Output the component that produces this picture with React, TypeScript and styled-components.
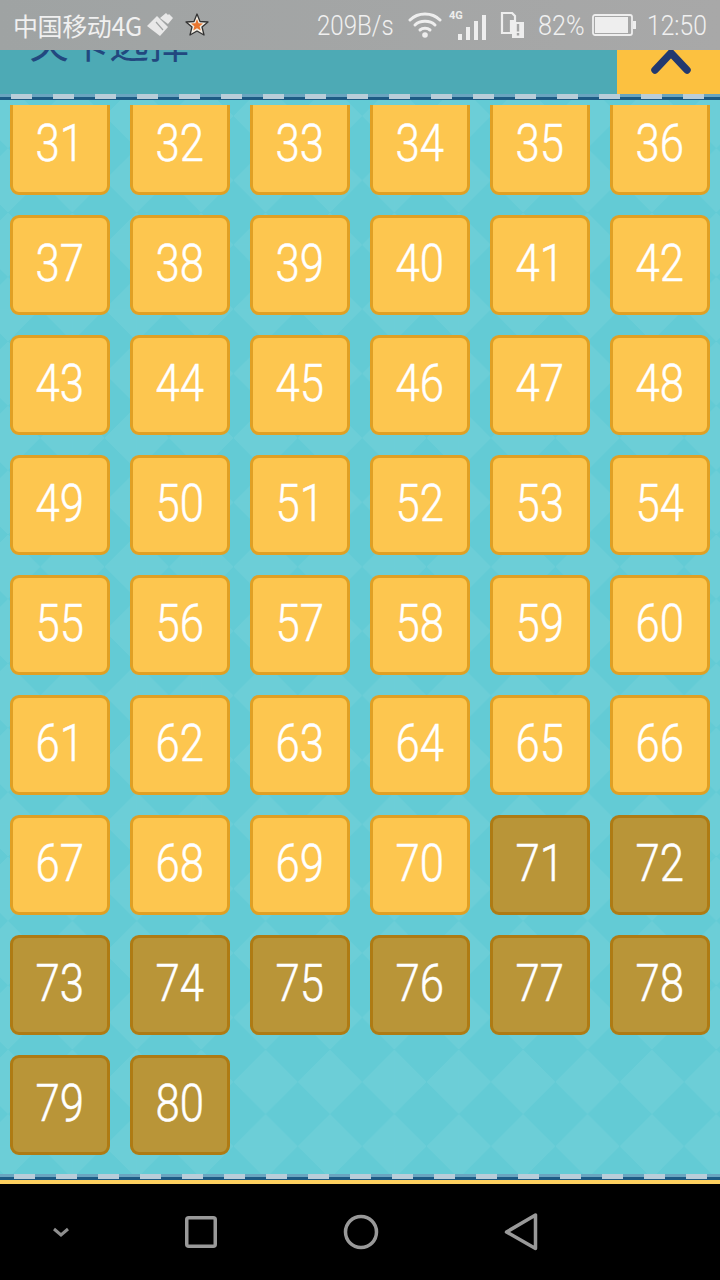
import styled, { createGlobalStyle } from "styled-components";

const GlobalStyle = createGlobalStyle`
  html, body {
    margin: 0;
    padding: 0;
    background: #000;
  }
`;

const Page = styled.div`
  width: 720px;
  height: 1280px;
  display: flex;
  flex-direction: column;
  overflow: hidden;
  font-family: Roboto, "Noto Sans CJK SC", sans-serif;
`;

const StatusBar = styled.div`
  height: 50px;
  flex: none;
  display: flex;
  align-items: center;
  justify-content: space-between;
  padding: 0 13px;
  background: linear-gradient(90deg, #9fa3a3, #a8a8a8);
  color: #f0f0f0;
  position: relative;
  z-index: 2;
`;

const StatusGroup = styled.div`
  display: flex;
  align-items: center;
`;

const Carrier = styled.span`
  font-size: 25px;
  letter-spacing: -0.4px;
  width: 130px;
  white-space: nowrap;
  font-family: "Noto Sans CJK SC", sans-serif;
`;

const NarrowText = styled.span<{ $width: number; $left: number; $scale: number }>`
  display: inline-block;
  width: ${(p) => p.$width}px;
  margin-left: ${(p) => p.$left}px;
  font-size: 28px;
  font-weight: 300;
  white-space: nowrap;
  transform: scaleX(${(p) => p.$scale});
  transform-origin: left center;
`;

const StatusIcon = styled.svg<{ $left: number }>`
  display: block;
  flex: none;
  margin-left: ${(p) => p.$left}px;
`;

const TopBar = styled.header`
  height: 44px;
  flex: none;
  display: flex;
  justify-content: space-between;
  background: #4daab5;
  overflow: hidden;
`;

const Title = styled.h1`
  margin: -38px 0 0 29px;
  font-family: "Noto Sans CJK SC", sans-serif;
  font-size: 40px;
  line-height: 58px;
  font-weight: 400;
  color: #22487f;
`;

const UpButton = styled.button`
  width: 103px;
  border: 0;
  padding: 0 0 0 4px;
  display: flex;
  justify-content: center;
  background: #fcc140;
`;

const Dashes = styled.div<{ $shift: number }>`
  height: 6px;
  flex: none;
  background:
    repeating-linear-gradient(
      90deg,
      #b9cdd9 0 21px,
      transparent 21px 42px
    ) ${(p) => p.$shift}px 0 / 200% 5px no-repeat,
    linear-gradient(#6aa5c0 0 50%, #1d5b84 50% 100%);
`;

const Board = styled.main`
  flex: 1;
  min-height: 0;
  display: flex;
  flex-direction: column;
  padding-top: 5px;
  background-color: #63cbd5;
  background-image:
    linear-gradient(45deg, #ffffff0f 25%, transparent 25%, transparent 75%, #ffffff0f 75%),
    linear-gradient(-45deg, #ffffff0f 25%, transparent 25%, transparent 75%, #ffffff0f 75%);
  background-size: 64.4px 64.4px;
  background-position: 8px 16px;
`;

const LevelClip = styled.div`
  flex: 1;
  min-height: 0;
  overflow: hidden;
`;

const LevelGrid = styled.div`
  display: grid;
  grid-template-columns: repeat(6, 100px);
  gap: 20px;
  margin-top: -10px;
  padding-left: 10px;
`;

const Level = styled.div<{ $locked: boolean }>`
  box-sizing: border-box;
  height: 100px;
  display: flex;
  align-items: center;
  justify-content: center;
  padding-bottom: 3px;
  border: 3px solid ${(p) => (p.$locked ? "#ae7b14" : "#e0a024")};
  border-radius: 9px;
  background: ${(p) => (p.$locked ? "#b99538" : "#fdc64f")};
  color: #fff;
  font-size: 52px;
  font-weight: 300;
  line-height: 60px;
  -webkit-text-stroke: 0.5px #fff;
`;

const LevelNumber = styled.span`
  display: block;
  transform: scaleX(0.84);
`;

const YellowEdge = styled.div`
  height: 4px;
  flex: none;
  background: #fdd05e;
`;

const NavBar = styled.nav`
  height: 96px;
  flex: none;
  display: flex;
  padding-right: 119px;
  background: #000;
`;

const NavSlot = styled.div<{ $wide: boolean }>`
  flex: ${(p) => (p.$wide ? "0 0 160px" : "0 0 121px")};
  display: flex;
  align-items: center;
  justify-content: center;
`;

const levels = Array.from({ length: 50 }, (_, i) => i + 31);

export default function App() {
  return (
    <Page>
      <GlobalStyle />
      <StatusBar>
        <StatusGroup>
          <Carrier>中国移动4G</Carrier>
          <StatusIcon $left={4} width="27" height="24" viewBox="0 0 27 24">
            <path d="M0 13 L10 3 L21 14 L13 23 Z" fill="#e8e8e8" />
            <path d="M13 5 L19 0 L21 2 L22 1 L26 5 L21 11 Z" fill="#e8e8e8" />
            <path d="M9 9 L16 17" stroke="#a0a3a3" strokeWidth="1.2" />
          </StatusIcon>
          <StatusIcon $left={11} width="24" height="24" viewBox="0 0 24 24">
            <path d="M12 1 L15 8.5 L23 9 L17 14 L19 22 L12 18 L5 22 L7 14 L1 9 L9 8.5 Z" fill="#f3efe6" stroke="#333" strokeWidth="1.3" strokeLinejoin="round" />
            <path d="M12 6 L13.6 10.2 L18 10.5 L14.6 13.3 L15.8 17.6 L12 15.2 L8.2 17.6 L9.4 13.3 L6 10.5 L10.4 10.2 Z" fill="#e8762f" />
          </StatusIcon>
        </StatusGroup>
        <StatusGroup>
          <NarrowText $width={76} $left={0} $scale={0.86}>209B/s</NarrowText>
          <StatusIcon $left={15} width="34" height="26" viewBox="0 0 34 26">
            <g fill="none" stroke="#eee" strokeWidth="3" strokeLinecap="round">
              <path d="M2 8 C10 0 24 0 32 8" />
              <path d="M7 13 C12 8 22 8 27 13" />
              <path d="M12 18 C14.500 15.800 19.500 15.800 22 18" />
            </g>
            <circle cx="17" cy="23" r="2.800" fill="#eee" />
          </StatusIcon>
          <StatusIcon $left={6} width="40" height="32" viewBox="0 0 40 32">
            <text x="1" y="10" fontSize="11" fontWeight="700" fontFamily="Roboto, sans-serif" fill="#eee">4G</text>
            <rect x="10" y="25" width="4" height="6" fill="#eee" />
            <rect x="18" y="18" width="4" height="13" fill="#eee" />
            <rect x="26" y="12" width="4" height="19" fill="#eee" />
            <rect x="34" y="6" width="4" height="25" fill="#eee" />
          </StatusIcon>
          <StatusIcon $left={12} width="24" height="26" viewBox="0 0 24 26">
            <path d="M2 1 H12 L15 4 V9 H11 V21 H2 Z" fill="none" stroke="#eee" strokeWidth="2.200" />
            <rect x="12" y="10" width="12" height="16" fill="#eee" />
            <rect x="16.800" y="12" width="2.400" height="7.500" fill="#a5a6a6" />
            <rect x="16.800" y="21" width="2.400" height="2.500" fill="#a5a6a6" />
          </StatusIcon>
          <NarrowText $width={54} $left={14} $scale={0.9}>82%</NarrowText>
          <StatusIcon $left={0} width="45" height="22" viewBox="0 0 45 22">
            <rect x="1" y="1" width="39" height="20" rx="2" fill="none" stroke="#eee" strokeWidth="1.800" />
            <rect x="3" y="3" width="33" height="16" fill="#eee" />
            <rect x="41" y="7" width="3" height="8" fill="#eee" />
          </StatusIcon>
          <NarrowText $width={60} $left={10} $scale={0.88}>12:50</NarrowText>
        </StatusGroup>
      </StatusBar>
      <TopBar>
        <Title>关卡选择</Title>
        <UpButton aria-label="up">
          <svg width="40" height="26" viewBox="0 0 40 26">
            <path d="M4 20 L20 3 L36 20" fill="none" stroke="#22396f" strokeWidth="7.500" strokeLinecap="round" strokeLinejoin="round" />
          </svg>
        </UpButton>
      </TopBar>
      <Dashes $shift={11} />
      <Board>
        <LevelClip>
          <LevelGrid>
            {levels.map((n) => (
              <Level key={n} $locked={n > 70}>
                <LevelNumber>{n}</LevelNumber>
              </Level>
            ))}
          </LevelGrid>
        </LevelClip>
      </Board>
      <Dashes $shift={14} />
      <YellowEdge />
      <NavBar>
        <NavSlot $wide={false}>
          <svg width="20" height="14" viewBox="0 0 20 14">
            <path d="M3 4 L10 10 L17 4" fill="none" stroke="#8f8f8f" strokeWidth="3" />
          </svg>
        </NavSlot>
        <NavSlot $wide>
          <svg width="32" height="32" viewBox="0 0 32 32">
            <rect x="1.750" y="1.750" width="28.500" height="28.500" rx="2" fill="none" stroke="#999" strokeWidth="3.500" />
          </svg>
        </NavSlot>
        <NavSlot $wide>
          <svg width="36" height="36" viewBox="0 0 36 36">
            <circle cx="18" cy="18" r="15.500" fill="none" stroke="#999" strokeWidth="3.500" />
          </svg>
        </NavSlot>
        <NavSlot $wide>
          <svg width="34" height="38" viewBox="0 0 34 38">
            <path d="M31.500 2 V35.500 L2.500 19 Z" fill="none" stroke="#999" strokeWidth="3.500" strokeLinejoin="round" />
          </svg>
        </NavSlot>
      </NavBar>
    </Page>
  );
}
